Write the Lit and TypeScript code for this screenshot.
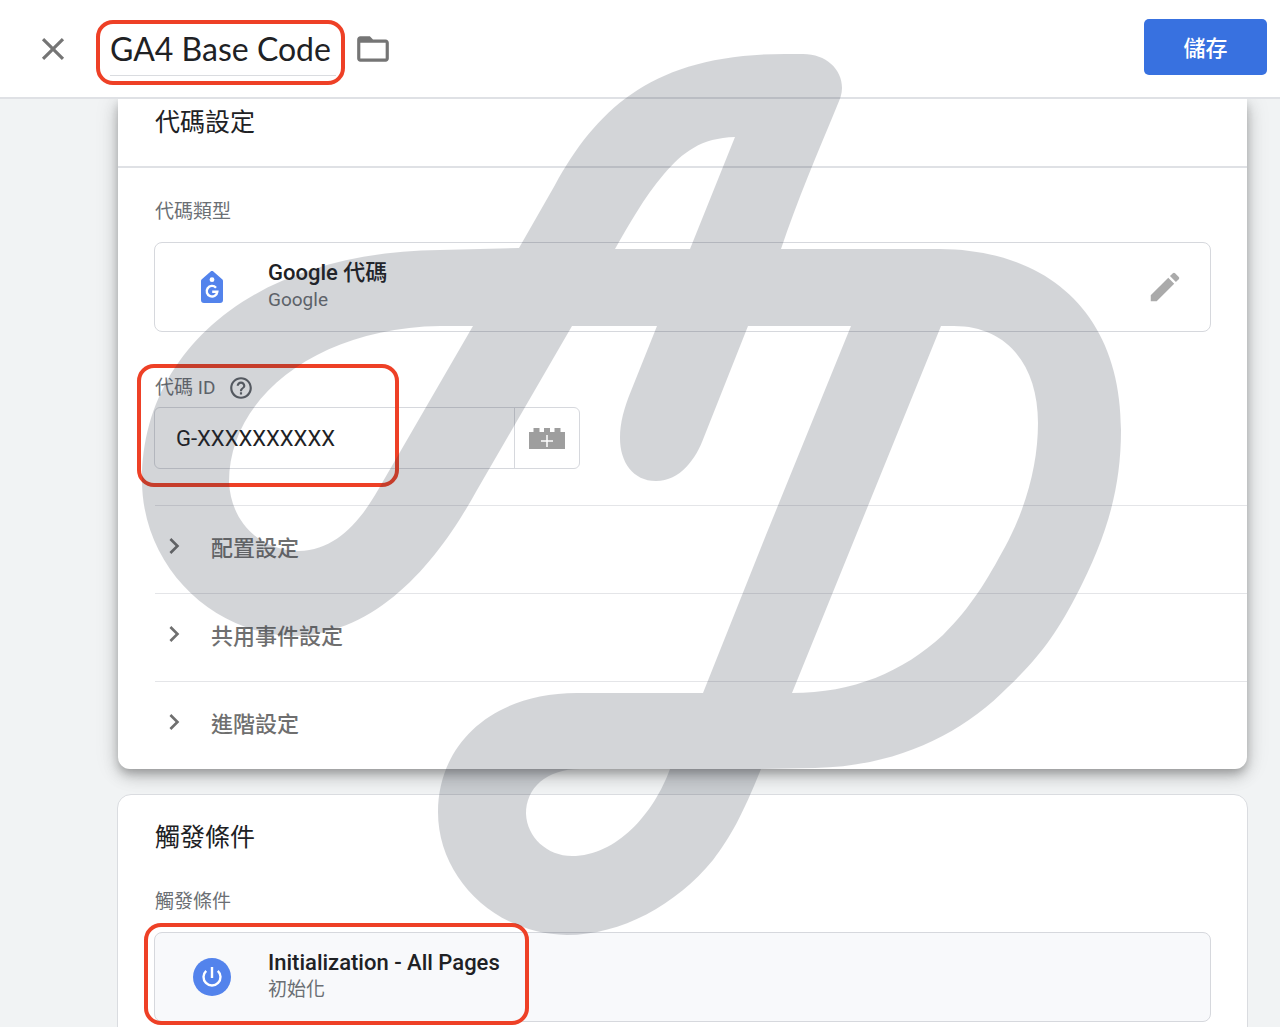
import { LitElement, html, css, svg } from "lit";
import { customElement, property } from "lit/decorators.js";

const sections = ["配置設定", "共用事件設定", "進階設定"];

const icon = (path: unknown, size: number) =>
  html`<svg width=${size} height=${size} viewBox="0 0 24 24" fill="currentColor" aria-hidden="true">${path}</svg>`;

const icons = {
  close: svg`<path d="M19 6.41 17.59 5 12 10.59 6.41 5 5 6.41 10.59 12 5 17.59 6.41 19 12 13.41 17.59 19 19 17.59 13.41 12z"/>`,
  folder: svg`<path d="M20 6h-8l-2-2H4c-1.1 0-1.99.9-1.99 2L2 18c0 1.1.9 2 2 2h16c1.1 0 2-.9 2-2V8c0-1.1-.9-2-2-2zm0 12H4V8h16v10z"/>`,
  edit: svg`<path d="M3 17.25V21h3.75L17.81 9.94l-3.75-3.75L3 17.25zM20.71 7.04a1 1 0 0 0 0-1.41l-2.34-2.34a1 1 0 0 0-1.41 0l-1.83 1.83 3.75 3.75 1.83-1.83z"/>`,
  help: svg`<path d="M11 18h2v-2h-2v2zm1-16C6.48 2 2 6.48 2 12s4.48 10 10 10 10-4.48 10-10S17.52 2 12 2zm0 18c-4.41 0-8-3.59-8-8s3.59-8 8-8 8 3.59 8 8-3.59 8-8 8zm0-14c-2.21 0-4 1.79-4 4h2c0-1.1.9-2 2-2s2 .9 2 2c0 2-3 1.75-3 5h2c0-2.25 3-2.5 3-5 0-2.21-1.79-4-4-4z"/>`,
  chevron: svg`<path d="M8.59 16.59 13.17 12 8.59 7.41 10 6l6 6-6 6z"/>`,
};

@customElement("brand-watermark")
export class BrandWatermark extends LitElement {
  static styles = css`
    :host { display: block; pointer-events: none; }
    .mark { display: block; fill: rgb(42, 50, 66); opacity: 0.2; }
  `;
  render() {
    return html`<svg class="mark" width="980" height="882" viewBox="142 54 980 882" aria-hidden="true">
      <path fill-rule="evenodd" d="
        M803 54
        C826 54 842 69 842 88 C842 94 840 99 837 106
        C818 152 797 201 781 249
        L940 249
        C1050 250 1121 315 1121 430
        C1121 492 1105 540 1076 596
        C1053 640 1035 661 1008 687
        C962 734 898 766 815 768
        L761 769
        C742 816 731 836 713 860
        C676 905 621 935 567 935
        C494 934 438 877 438 812
        C438 745 491 693 577 693
        L703 693 L766 535 L851 326 L748 326 L704 437
        C696 459 680 481 656 481
        C633 481 620 462 620 438
        C620 423 624 408 631 391
        L657 326 L572 326 L477 490
        C438 561 378 636 290 636
        C210 632 142 565 142 480
        C142 352 252 252 440 250
        L519 248 L555 185
        C598 107 655 54 785 54 Z
        M735 137 C701 138 683 152 664 174 C643 199 630 223 615 249 L690 249 Z
        M473 326 L440 326 C316 328 229 398 229 482 C231 524 262 551 299 551 C334 550 358 525 378 490 Z
        M941 326 L792 693 C853 693 903 672 943 635 C972 606 987 580 1005 547 C1027 506 1038 463 1038 423 C1038 365 1007 326 954 326 Z
        M580 769 C546 769 526 788 526 814 C527 837 547 856 572 856 C617 856 654 813 670 769 Z"/>
    </svg>`;
  }
}

@customElement("info-row")
export class InfoRow extends LitElement {
  @property() heading = "";
  @property() detail = "";
  @property({ type: Boolean, reflect: true }) shaded = false;

  static styles = css`
    :host {
      display: grid;
      grid-template-columns: 113px 1fr auto;
      align-items: center;
      box-sizing: border-box;
      min-height: 90px;
      padding-right: 26px;
      border: 1px solid #d6d8dd;
      border-radius: 8px;
      background: #fff;
      font-family: Roboto, "Noto Sans CJK TC", sans-serif;
    }
    :host([shaded]) { background: #f8f9fb; }
    .mark { display: flex; justify-content: center; }
    .text { display: flex; flex-direction: column; padding-bottom: 2px; }
    .heading { font-size: 22px; line-height: 28px; font-weight: 500; color: #202124; }
    .detail { font-size: 19px; line-height: 26px; color: #6b6f74; }
  `;
  render() {
    return html`
      <div class="mark"><slot name="mark"></slot></div>
      <div class="text">
        <span class="heading">${this.heading}</span>
        <span class="detail">${this.detail}</span>
      </div>
      <slot name="action"></slot>
    `;
  }
}

@customElement("app-root")
export class AppRoot extends LitElement {
  static styles = css`
    :host {
      display: flex;
      flex-direction: column;
      position: relative;
      height: 100vh;
      overflow: hidden;
      background: #f1f3f4;
      color: #202124;
      font-family: Roboto, "Noto Sans CJK TC", sans-serif;
    }
    button {
      display: flex;
      align-items: center;
      justify-content: center;
      margin: 0;
      padding: 0;
      border: 0;
      background: none;
      color: #757575;
      font-family: inherit;
      cursor: pointer;
    }
    input {
      box-sizing: border-box;
      margin: 0;
      padding: 0;
      border: 0;
      outline: 0;
      background: none;
      color: #202124;
    }
    h2 { margin: 0; font-size: 25px; line-height: 36px; font-weight: 400; }
    svg { display: block; }

    .topbar {
      display: flex;
      align-items: center;
      flex: none;
      height: 97px;
      padding: 0 13px 0 34px;
      border-bottom: 2px solid #dfe1e5;
      background: #fff;
    }
    .title { position: relative; margin: 0 18px 0 38px; }
    .title-input {
      width: 226px;
      height: 54px;
      border-bottom: 1px solid #dadce0;
      font-family: Lato, "Noto Sans CJK TC", sans-serif;
      font-size: 32px;
    }
    .save {
      width: 123px;
      height: 56px;
      margin-left: auto;
      margin-bottom: 3px;
      padding-bottom: 2px;
      border-radius: 5px;
      background: #3871e0;
      color: #fff;
      font-size: 22px;
      font-weight: 500;
    }
    .main {
      flex: 1;
      min-height: 0;
      padding: 0 33px 0 118px;
      overflow-y: auto;
      scrollbar-width: none;
    }
    .card { background: #fff; }
    .settings {
      border-radius: 0 0 12px 12px;
      box-shadow:
        0 5px 8px -1px rgba(0, 0, 0, 0.2),
        0 8px 16px rgba(0, 0, 0, 0.15),
        0 2px 24px rgba(0, 0, 0, 0.14);
    }
    .card-head { padding: 6px 37px 25px; border-bottom: 2px solid #dfe1e5; }
    .card-body { padding: 30px 36px 36px; }
    .caption {
      display: flex;
      align-items: center;
      gap: 13px;
      padding-left: 1px;
      font-size: 19px;
      line-height: 28px;
      color: #6b6f74;
    }
    .row { margin-top: 16px; }
    .edit { color: #aaa; }
    .field { position: relative; width: 426px; margin-top: 42px; }
    .help { color: #5f6368; }
    .control {
      display: flex;
      box-sizing: border-box;
      height: 62px;
      margin-top: 5px;
      border: 1px solid #d6d8dd;
      border-radius: 6px;
    }
    .control-input {
      flex: 1;
      min-width: 0;
      padding-left: 21px;
      font-family: Roboto, sans-serif;
      font-size: 22px;
    }
    .variable { width: 65px; border-left: 1px solid #d6d8dd; color: #9e9e9e; }
    .sections { margin: 0; padding: 0 0 0 37px; list-style: none; }
    .section { border-top: 1px solid #e4e5e8; }
    .section-button {
      justify-content: flex-start;
      gap: 21px;
      width: 100%;
      height: 87px;
      padding: 0 0 7px 3px;
      color: #6f6f6f;
      font-size: 22px;
      font-weight: 500;
    }
    .triggers {
      margin: 25px -1px 0;
      padding: 25px 36px 36px;
      border: 1px solid #dadce0;
      border-radius: 14px;
    }
    .triggers-head { margin: 0 1px 32px; }
    .highlight {
      position: absolute;
      box-sizing: border-box;
      border: 4px solid #ee4026;
      border-radius: 17px;
      pointer-events: none;
    }
    .around-title { inset: -2px -9px -9px -14px; }
    .around-field { top: -10px; left: -17px; width: 262px; height: 123px; }
    .trigger { position: relative; }
    .around-trigger { top: -9px; left: -10px; width: 385px; height: 102px; }
    .watermark { position: absolute; top: 54px; left: 142px; }
  `;

  render() {
    return html`
      <header class="topbar">
        <button type="button" aria-label="關閉">${icon(icons.close, 38)}</button>
        <div class="title">
          <input class="title-input" aria-label="代碼名稱" .value=${"GA4 Base Code"} />
          <div class="highlight around-title"></div>
        </div>
        <button type="button" aria-label="資料夾">${icon(icons.folder, 38)}</button>
        <button class="save" type="button">儲存</button>
      </header>

      <main class="main">
        <section class="card settings">
          <div class="card-head"><h2>代碼設定</h2></div>
          <div class="card-body">
            <div class="caption">代碼類型</div>
            <info-row class="row" heading="Google 代碼" detail="Google">
              <svg slot="mark" width="24" height="32" viewBox="0 0 24 32" aria-hidden="true">
                <path fill="#5383ec" d="M10.4.7a2.2 2.2 0 0 1 3.2 0l8.6 7.5c.6.6.8 1.1.8 1.9V29a3 3 0 0 1-3 3H4a3 3 0 0 1-3-3V10.1c0-.8.2-1.3.8-1.900z"/>
                <circle cx="12" cy="8.700" r="2.400" fill="#fff"/>
                <path fill="none" stroke="#fff" stroke-width="2.400" d="M16 16.700a5.300 5.300 0 1 0 1.300 4.100H12.200"/>
              </svg>
              <button slot="action" class="edit" type="button" aria-label="編輯">${icon(icons.edit, 38)}</button>
            </info-row>

            <div class="field">
              <div class="caption">
                <label for="tag-id">代碼 ID</label>
                <button class="help" type="button" aria-label="說明">${icon(icons.help, 26)}</button>
              </div>
              <div class="control">
                <input id="tag-id" class="control-input" .value=${"G-XXXXXXXXXX"} />
                <button class="variable" type="button" aria-label="插入變數">
                  <svg width="36" height="22" viewBox="0 0 36 22" aria-hidden="true">
                    <path fill="currentColor" d="M0 5h4.500V1h6v4H15V1h6v4h4.500V1h6v4H36v17H0z"/>
                    <path stroke="#fff" stroke-width="1.500" d="M12 14h12M18 8v12"/>
                  </svg>
                </button>
              </div>
              <div class="highlight around-field"></div>
            </div>
          </div>
          <ul class="sections">
            ${sections.map(
              (name) => html`<li class="section">
                <button class="section-button" type="button" aria-expanded="false">
                  ${icon(icons.chevron, 32)}<span>${name}</span>
                </button>
              </li>`
            )}
          </ul>
        </section>

        <section class="card triggers">
          <h2 class="triggers-head">觸發條件</h2>
          <div class="caption">觸發條件</div>
          <div class="trigger row">
            <info-row shaded heading="Initialization - All Pages" detail="初始化">
              <svg slot="mark" width="38" height="38" viewBox="0 0 38 38" aria-hidden="true">
                <circle cx="19" cy="19" r="19" fill="#5383ec"/>
                <path fill="none" stroke="#fff" stroke-width="2.400" d="M19 9v11M13.200 12.800a8.500 8.500 0 1 0 11.600 0"/>
              </svg>
            </info-row>
            <div class="highlight around-trigger"></div>
          </div>
        </section>
      </main>

      <brand-watermark class="watermark"></brand-watermark>
    `;
  }
}
